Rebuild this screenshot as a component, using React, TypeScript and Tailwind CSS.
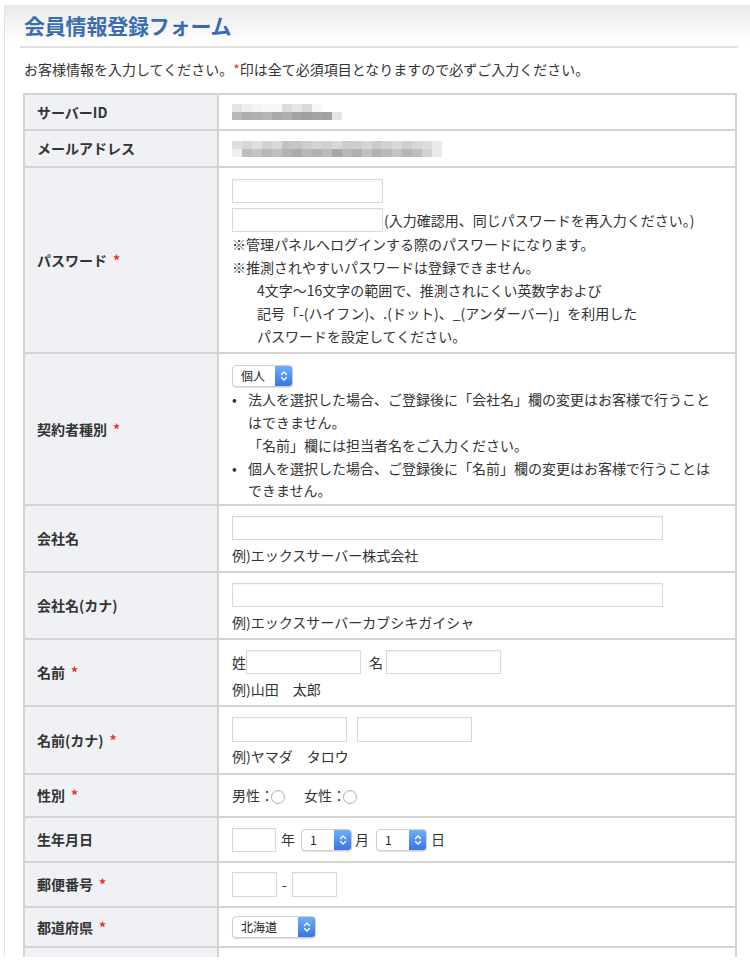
import React from 'react'

const jp = { fontFamily: '"Noto Sans CJK JP", "Noto Sans", sans-serif' }

function Req() {
  return <span className="text-[#e0352b] ml-[6px]">*</span>
}

function TextBox({ w, h = 24 }: { w: number; h?: number }) {
  return (
    <span
      className="inline-block bg-white border border-[#d9d9d9] shadow-[inset_0_1px_1px_rgba(0,0,0,0.04)] align-middle"
      style={{ width: w, height: h }}
    />
  )
}

function Select({ label, w }: { label: string; w: number }) {
  return (
    <span
      className="inline-flex items-stretch h-[22px] bg-white border border-[#cfcfcf] rounded-[4px] shadow-[0_1px_1px_rgba(0,0,0,0.12)] align-middle overflow-hidden"
      style={{ width: w }}
    >
      <span className="flex-1 flex items-center pl-[8px] text-[12px] text-[#222] leading-none">{label}</span>
      <span className="w-[17px] flex items-center justify-center bg-gradient-to-b from-[#72acf9] to-[#3776e6]">
        <svg width="8" height="12" viewBox="0 0 8 12" fill="none" stroke="white" strokeWidth="1.4" strokeLinecap="round" strokeLinejoin="round">
          <path d="M1.5 4.5 4 2l2.5 2.5" />
          <path d="M1.5 7.5 4 10l2.5-2.5" />
        </svg>
      </span>
    </span>
  )
}

function Radio() {
  return <span className="inline-block w-[14px] h-[14px] rounded-full border border-[#b5b5b5] bg-white align-middle shadow-[inset_0_1px_1px_rgba(0,0,0,0.08)]" />
}

// pixelated (blurred-out) private values
function Mosaic({ rows }: { rows: string[][] }) {
  return (
    <div className="flex flex-col blur-[0.5px]">
      {rows.map((r, i) => (
        <div key={i} className="flex">
          {r.map((c, j) => (
            <span key={j} className="block w-[10px] h-[8px]" style={{ background: c }} />
          ))}
        </div>
      ))}
    </div>
  )
}

const serverMosaic = [
  ['#e4e4e4', '#eeeeee', '#f4f4f4', '#f8f8f8', '#f8f8f8', '#dcdcdc', '#e6e6e6', '#dadada', '#f8f8f8', '#ffffff', '#ffffff'],
  ['#b8b8b8', '#adadad', '#b1b1b1', '#b5b5b5', '#a9a9a9', '#aeaeae', '#a2a2a2', '#9f9f9f', '#a4a4a4', '#a1a1a1', '#e4e4e4'],
]

const mailMosaic = [
  ['#dedede', '#d6d6d6', '#e0e0e0', '#d2d2d2', '#d9d9d9', '#c2c2c2', '#c5c5c5', '#cccccc', '#d4d4d4', '#d0d0d0', '#d8d8d8', '#cbcbcb', '#cecece', '#d5d5d5', '#c9c9c9', '#d1d1d1', '#d9d9d9', '#cfcfcf', '#d6d6d6', '#dcdcdc', '#eaeaea'],
  ['#eeeeee', '#bdbdbd', '#c3c3c3', '#b7b7b7', '#bfbfbf', '#b3b3b3', '#ababab', '#b9b9b9', '#b1b1b1', '#bcbcbc', '#a7a7a7', '#b7b7b7', '#afafaf', '#c1c1c1', '#b2b2b2', '#bababa', '#c4c4c4', '#b6b6b6', '#bebebe', '#d2d2d2', '#ebebeb'],
]

function Row({ label, req, h, top, children }: { label: string; req?: boolean; h: number; top?: boolean; children: React.ReactNode }) {
  return (
    <div className="flex border-b-2 border-[#d3d3d3]" style={{ height: h }}>
      <div className="w-[194px] shrink-0 bg-[#eff1f4] border-r-2 border-[#d3d3d3] flex items-center pl-[12px] text-[14px] font-bold text-[#333]">
        {label}
        {req && <Req />}
      </div>
      <div className={`flex-1 bg-white px-[13px] text-[14px] text-[#333] ${top ? 'pt-[10px]' : 'flex items-center'}`}>{children}</div>
    </div>
  )
}

export default function App() {
  return (
    <div className="w-[750px] h-[967px] bg-white overflow-hidden pt-[5px] pl-[4px]" style={jp}>
      <div className="h-[952px] border-l border-[#e2e2e2] bg-gradient-to-b from-[#e9e9e9] via-white via-[4%] to-white overflow-hidden">
        {/* heading */}
        <div className="pl-[19px] pt-[5px] h-[41px]">
          <h1 className="text-[21px] leading-[30px] font-bold text-[#3a6cb4] tracking-[-0.2px]">会員情報登録フォーム</h1>
        </div>
        <div className="ml-[15px] w-[718px] h-[2px] bg-[#e0e0e0]" />
        <p className="pl-[19px] mt-[11px] text-[14px] leading-[20px] text-[#333]">
          お客様情報を入力してください。<span className="text-[#e0352b]">*</span>印は全て必須項目となりますので必ずご入力ください。
        </p>

        {/* form table */}
        <div className="ml-[18px] mt-[14px] w-[714px] border-t-2 border-x-2 border-[#d3d3d3]">
          <Row label="サーバーID" h={36}>
            <Mosaic rows={serverMosaic} />
          </Row>
          <Row label="メールアドレス" h={37}>
            <Mosaic rows={mailMosaic} />
          </Row>
          <Row label="パスワード" req h={186} top>
            <div className="pt-[1px]">
              <TextBox w={151} />
            </div>
            <div className="mt-[5px] flex items-center">
              <TextBox w={151} />
              <span className="ml-[1px]">(入力確認用、同じパスワードを再入力ください。)</span>
            </div>
            <div className="mt-[1px] leading-[23px]">
              <div>※管理パネルへログインする際のパスワードになります。</div>
              <div>※推測されやすいパスワードは登録できません。</div>
              <div className="pl-[25px]">4文字〜16文字の範囲で、推測されにくい英数字および</div>
              <div className="pl-[25px]">記号「-(ハイフン)、.(ドット)、_(アンダーバー)」を利用した</div>
              <div className="pl-[25px]">パスワードを設定してください。</div>
            </div>
          </Row>
          <Row label="契約者種別" req h={152} top>
            <Select label="個人" w={61} />
            <ul className="mt-[1px] leading-[22.8px]">
              <li className="flex">
                <span className="w-[16px] shrink-0">•</span>
                <span>
                  法人を選択した場合、ご登録後に「会社名」欄の変更はお客様で行うこと
                  <br />
                  はできません。
                  <br />
                  「名前」欄には担当者名をご入力ください。
                </span>
              </li>
              <li className="flex">
                <span className="w-[16px] shrink-0">•</span>
                <span>
                  個人を選択した場合、ご登録後に「名前」欄の変更はお客様で行うことは
                  <br />
                  できません。
                </span>
              </li>
            </ul>
          </Row>
          <Row label="会社名" h={67} top>
            <TextBox w={431} />
            <div className="mt-[4px] leading-[22px]">例)エックスサーバー株式会社</div>
          </Row>
          <Row label="会社名(カナ)" h={67} top>
            <TextBox w={431} />
            <div className="mt-[4px] leading-[22px]">例)エックスサーバーカブシキガイシャ</div>
          </Row>
          <Row label="名前" req h={67} top>
            <div className="flex items-center">
              <span className="w-[14px]">姓</span>
              <TextBox w={115} />
              <span className="ml-[8px] w-[17px]">名</span>
              <TextBox w={115} />
            </div>
            <div className="mt-[4px] leading-[22px]">例)山田　太郎</div>
          </Row>
          <Row label="名前(カナ)" req h={68} top>
            <div className="flex items-center gap-[10px]">
              <TextBox w={115} h={25} />
              <TextBox w={115} h={25} />
            </div>
            <div className="mt-[3px] leading-[22px]">例)ヤマダ　タロウ</div>
          </Row>
          <Row label="性別" req h={43}>
            <span>男性：</span>
            <span className="-ml-[3px]">
              <Radio />
            </span>
            <span className="ml-[19px]">女性：</span>
            <span className="-ml-[3px]">
              <Radio />
            </span>
          </Row>
          <Row label="生年月日" req={false} h={45}>
            <TextBox w={44} />
            <span className="ml-[5px] mr-[6px]">年</span>
            <Select label="1" w={51} />
            <span className="ml-[3px] mr-[7px]">月</span>
            <Select label="1" w={51} />
            <span className="ml-[4px]">日</span>
          </Row>
          <Row label="郵便番号" req h={45}>
            <TextBox w={45} h={25} />
            <span className="mx-[5px]">-</span>
            <TextBox w={45} h={25} />
          </Row>
          <Row label="都道府県" req h={40}>
            <Select label="北海道" w={84} />
          </Row>
          <Row label="" h={40}>
            <span />
          </Row>
        </div>
      </div>
    </div>
  )
}
